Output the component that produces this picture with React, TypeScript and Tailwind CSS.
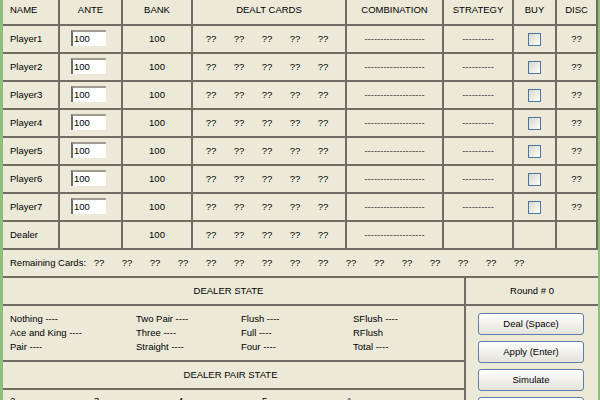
import clsx from 'clsx';

const ln = 'border-[#6e6c63]';

// fixed widths of the eight table columns, left to right
const colW = ['w-[57px]', 'w-[63px]', 'w-[70px]', 'w-[154px]', 'w-[97px]', 'w-[70px]', 'w-[43px]', 'w-[41px]'];

const headers = ['NAME', 'ANTE', 'BANK', 'DEALT CARDS', 'COMBINATION', 'STRATEGY', 'BUY', 'DISC'];

const players = ['Player1', 'Player2', 'Player3', 'Player4', 'Player5', 'Player6', 'Player7'];

function Cell({ i, className, children }: { i: number; className?: string; children?: React.ReactNode }) {
  return (
    <div className={clsx(colW[i], 'shrink-0 h-full flex items-center justify-center border-r-2', ln, className)}>
      {children}
    </div>
  );
}

function AnteBox() {
  return (
    <div className="ml-[11px] mb-[3px] w-[35px] h-[16px] bg-white border-t-2 border-l-2 border-t-[#9d9b92] border-l-[#6d6c66] pl-[1px] leading-[14px]">
      100
    </div>
  );
}

function CheckBox() {
  return <div className="w-[13px] h-[13px] border border-[#4d74a6] bg-gradient-to-br from-[#d6d5cd] to-white" />;
}

function Cards({ n }: { n: number }) {
  return (
    <>
      {Array.from({ length: n }).map((_, k) => (
        <span key={k} className="w-[28px] shrink-0 text-center">??</span>
      ))}
    </>
  );
}

function XpButton({ label }: { label: string }) {
  return (
    <button className="w-[106px] h-[22px] shrink-0 rounded-[3px] border border-[#5c7ea8] bg-gradient-to-b from-white to-[#e4e2da] text-black">
      {label}
    </button>
  );
}

const dealerState = [
  ['Nothing ----', 'Ace and King ----', 'Pair ----'],
  ['Two Pair ----', 'Three ----', 'Straight ----'],
  ['Flush ----', 'Full ----', 'Four ----'],
  ['SFlush ----', 'RFlush', 'Total ----'],
];
const stateColW = ['w-[126px]', 'w-[105px]', 'w-[112px]', 'w-[100px]'];

export default function App() {
  return (
    <div className="w-[600px] h-[400px] overflow-hidden bg-[#ece9d8] text-black text-[9.5px] font-['Liberation_Sans',Arial,sans-serif] border-l-[3px] border-r-[2px] border-[#8fbe7a] flex flex-col">
      {/* header */}
      <div className={clsx('flex h-[26px] shrink-0 border-b-2', ln)}>
        {headers.map((h, i) => (
          <Cell key={h} i={i} className={clsx('pb-[4px]', i === 0 && 'justify-start pl-[7px]')}>
            {h}
          </Cell>
        ))}
      </div>

      {/* player rows + dealer */}
      {[...players, 'Dealer'].map((name) => {
        const dealer = name === 'Dealer';
        return (
          <div key={name} className={clsx('flex h-[28px] shrink-0 border-b-2', ln)}>
            <Cell i={0} className="justify-start pl-[7px]">{name}</Cell>
            <Cell i={1} className="justify-start">{!dealer && <AnteBox />}</Cell>
            <Cell i={2}>100</Cell>
            <Cell i={3} className="justify-start pl-[4px]"><Cards n={5} /></Cell>
            <Cell i={4} className="text-[#3a3a3a]">-------------------</Cell>
            <Cell i={5} className="text-[#3a3a3a]">{!dealer && '----------'}</Cell>
            <Cell i={6}>{!dealer && <CheckBox />}</Cell>
            <Cell i={7}>{!dealer && '??'}</Cell>
          </div>
        );
      })}

      {/* remaining cards */}
      <div className={clsx('flex items-center h-[28px] shrink-0 border-b-2 pl-[7px] whitespace-nowrap', ln)}>
        <span className="w-[75px] shrink-0">Remaining Cards:</span>
        <Cards n={16} />
      </div>

      <div className="flex flex-1 min-h-0">
        <div className={clsx('w-[463px] shrink-0 flex flex-col border-r-2', ln)}>
          <div className={clsx('h-[28px] shrink-0 flex items-center justify-center pr-[10px] border-b-2', ln)}>
            DEALER STATE
          </div>
          <div className={clsx('h-[56px] shrink-0 flex pl-[7px] pt-[6px] border-b-2 leading-[14px] whitespace-nowrap', ln)}>
            {dealerState.map((col, i) => (
              <div key={i} className={clsx(stateColW[i], 'shrink-0 flex flex-col')}>
                {col.map((t) => (
                  <span key={t}>{t}</span>
                ))}
              </div>
            ))}
          </div>
          <div className={clsx('h-[28px] shrink-0 flex items-center justify-center pr-[6px] border-b-2', ln)}>
            DEALER PAIR STATE
          </div>
          <div className="flex pl-[7px] pt-[4px]">
            {['2', '3', '4', '5', 'A'].map((c) => (
              <span key={c} className="w-[84px] shrink-0">{c}</span>
            ))}
          </div>
        </div>

        <div className="flex-1 flex flex-col">
          <div className={clsx('h-[28px] shrink-0 flex items-center justify-center border-b-2', ln)}>
            Round # 0
          </div>
          <div className="flex flex-col gap-[6px] pt-[7px] pl-[12px]">
            <XpButton label="Deal (Space)" />
            <XpButton label="Apply (Enter)" />
            <XpButton label="Simulate" />
            <XpButton label="" />
          </div>
        </div>
      </div>
    </div>
  );
}
